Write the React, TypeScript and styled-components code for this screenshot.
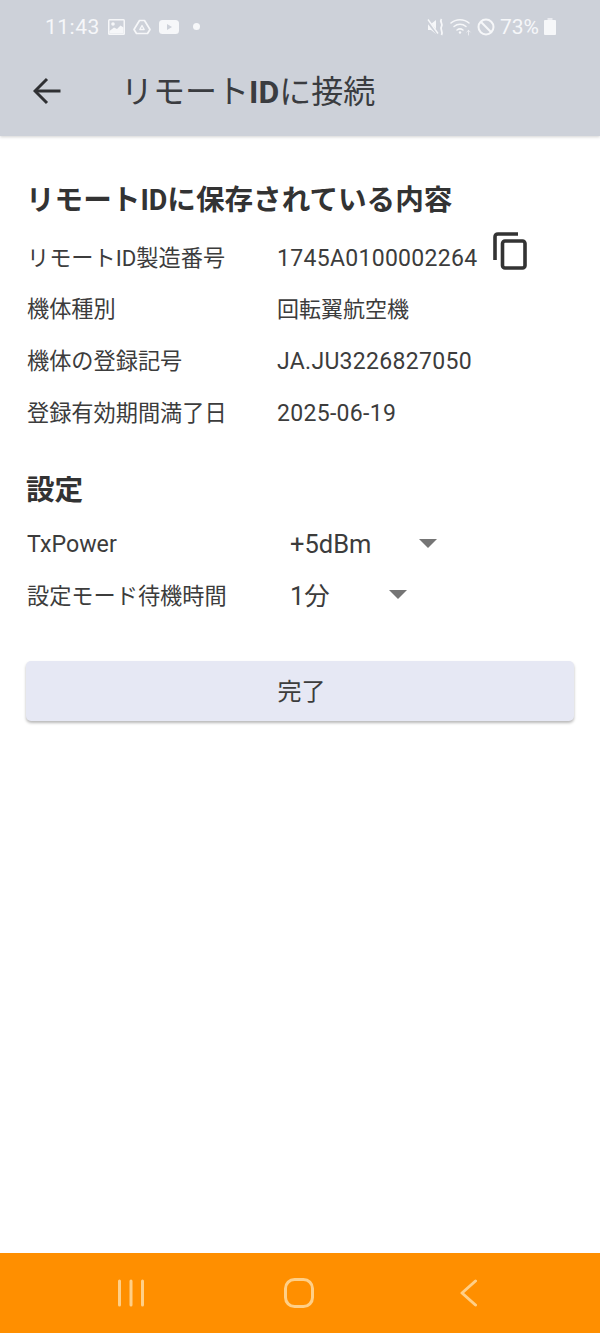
import React from 'react';
import styled, { createGlobalStyle } from 'styled-components';

const FONT = `Roboto, 'Noto Sans CJK JP', sans-serif`;

const GlobalStyle = createGlobalStyle`
    html, body {
        margin: 0;
        padding: 0;
        background: #fff;
    }
`;

const Page = styled.div`
    display: flex;
    flex-direction: column;
    width: 600px;
    height: 1333px;
    overflow: hidden;
    font-family: ${FONT};
    color: #333;
    background: #fff;
`;

const Top = styled.header`
    flex: none;
    height: 136px;
    background: #cdd1d9;
    box-shadow: 0 1px 3px rgba(0, 0, 0, 0.18);
    display: flex;
    flex-direction: column;
`;

const StatusBar = styled.div`
    display: flex;
    align-items: center;
    justify-content: space-between;
    height: 53px;
    padding: 0 44px 0 45px;
    color: #f6f7f9;
    font-size: 21px;
    line-height: 26px;
`;

const StatusGroup = styled.div`
    display: flex;
    align-items: center;
    gap: ${(p: { $gap: number }) => p.$gap}px;
`;

const StatusTime = styled.span`
    letter-spacing: 0.5px;
`;

const AppBar = styled.div`
    display: flex;
    align-items: center;
    height: 75px;
    padding-left: 33px;
`;

const BackButton = styled.div`
    display: flex;
    width: 88px;
`;

const Title = styled.h1`
    margin: 0;
    font-size: 32px;
    line-height: 40px;
    font-weight: 400;
    color: #3a3c40;
    padding-top: 3px;
    b {
        font-weight: 700;
    }
`;

const Main = styled.main`
    flex: 1;
    padding: 45px 26px 0 27px;
`;

const Heading = styled.h2`
    margin: 0 0 ${(p: { $gap: number }) => p.$gap}px -1px;
    height: 38px;
    line-height: 38px;
    font-size: 28.6px;
    font-weight: 700;
    color: #333;
`;

const InfoList = styled.div`
    display: flex;
    flex-direction: column;
    margin-bottom: 32px;
`;

const Row = styled.div`
    display: flex;
    align-items: center;
    height: 51.6px;
    color: #3c3c3c;
`;

const Label = styled.div<{ $latin?: boolean; $raised?: boolean }>`
    flex: none;
    width: 250px;
    margin-top: ${(p) => (p.$raised ? -2 : 0)}px;
    white-space: nowrap;
    line-height: 30px;
    font-size: ${(p) => (p.$latin ? 23.2 : 22.2)}px;
`;

const Value = styled.div<{ $latin?: boolean }>`
    white-space: nowrap;
    line-height: 30px;
    font-size: ${(p) => (p.$latin ? 23 : 22)}px;
    letter-spacing: ${(p) => (p.$latin ? 0.3 : 0)}px;
`;

const CopyButton = styled.div`
    display: flex;
    margin: -16px 0 0 16px;
`;

const SelectValue = styled.div`
    display: flex;
    align-items: center;
    margin-left: 13px;
    width: ${(p: { $width: number }) => p.$width}px;
    justify-content: space-between;
    line-height: 32px;
    font-size: 25.5px;
    color: #3c3c3c;
    white-space: nowrap;
`;

const Caret = styled.span`
    width: 0;
    height: 0;
    border-left: 9.5px solid transparent;
    border-right: 9.5px solid transparent;
    border-top: 9.5px solid #757575;
    margin-top: -2px;
`;

const DoneButton = styled.button`
    display: block;
    width: 548px;
    height: 60px;
    margin: 39px 0 0 -1px;
    padding: 0 0 2px 3px;
    border: 0;
    border-radius: 5px;
    background: #e6e8f4;
    box-shadow: 0 2px 3px rgba(0, 0, 0, 0.28);
    font-family: ${FONT};
    font-size: 24px;
    color: #3c3c3c;
`;

const NavBar = styled.nav`
    flex: none;
    height: 80px;
    background: #ff8f00;
    display: flex;
    align-items: center;
    gap: 139px;
    padding-left: 117px;
    box-sizing: border-box;
`;

const NavBack = styled.span`
    display: flex;
    margin-left: 7px;
`;

const StatusDot = styled.span`
    width: 7px;
    height: 7px;
    margin-left: 6px;
    border-radius: 50%;
    background: #f6f7f9;
`;

function GalleryIcon() {
    return (
        <svg width="17" height="16" viewBox="0 0 17 16">
            <rect width="17" height="16" rx="1.5" fill="#f6f7f9" />
            <rect x="1.5" y="1.5" width="14" height="13" fill="#cdd1d9" />
            <circle cx="5" cy="5" r="1.8" fill="#f6f7f9" />
            <path d="M1.5 12 L6 8.500 L9 10 L12.500 6.500 L15.500 8.500 V14.500 H1.500 Z" fill="#f6f7f9" />
        </svg>
    );
}

function DriveIcon() {
    return (
        <svg width="18" height="16" viewBox="0 0 18 16" fill="none" stroke="#f6f7f9" strokeWidth="1.7" strokeLinejoin="round">
            <path d="M6.500 1.500 H11.500 L17 10.500 L14.500 14.500 H3.500 L1 10.500 Z" />
            <path d="M9 6.500 L11.200 10.500 H6.800 Z" strokeWidth="1.300" />
        </svg>
    );
}

function YoutubeIcon() {
    return (
        <svg width="20" height="14" viewBox="0 0 20 14">
            <rect width="20" height="14" rx="3.500" fill="#f6f7f9" />
            <path d="M8 4 L13 7 L8 10 Z" fill="#cdd1d9" />
        </svg>
    );
}

function MuteIcon() {
    return (
        <svg width="18" height="18" viewBox="0 0 18 18" fill="none">
            <path d="M1 6 H4 L9 2 V16 L4 12 H1 Z" fill="#f6f7f9" />
            <path d="M0 2.500 L10 15" stroke="#cdd1d9" strokeWidth="3" />
            <path d="M1 1.500 L11 15.500" stroke="#f6f7f9" strokeWidth="1.400" />
            <path d="M14.500 1 C12 4 16.500 5.500 14.500 8.500 C12.500 11.500 16.500 13 14.500 17" stroke="#f6f7f9" strokeWidth="1.800" />
        </svg>
    );
}

function WifiIcon() {
    return (
        <svg width="22" height="20" viewBox="0 0 22 20" fill="none" stroke="#f6f7f9" strokeLinecap="round">
            <path d="M1 6 C6 1.500 14 1.500 19 6" strokeWidth="1.500" />
            <path d="M4 9.500 C7.500 6.500 12.500 6.500 16 9.500" strokeWidth="1.500" />
            <path d="M7 13 C9 11.500 11 11.500 13 13" strokeWidth="1.500" />
            <circle cx="10" cy="15.500" r="1.200" fill="#f6f7f9" stroke="none" />
            <path d="M18.500 18 V13.500 M16.800 15 L18.500 13.300 L20.200 15" strokeWidth="1" opacity="0.7" />
        </svg>
    );
}

function BlockIcon() {
    return (
        <svg width="18" height="18" viewBox="0 0 18 18" fill="none" stroke="#f6f7f9" strokeWidth="2">
            <circle cx="9" cy="9" r="7.500" />
            <path d="M3.800 3.800 L14.200 14.200" />
        </svg>
    );
}

function BatteryIcon() {
    return (
        <svg width="12" height="17" viewBox="0 0 12 17">
            <rect x="3.500" width="5" height="2" fill="#f6f7f9" opacity="0.7" />
            <rect y="2" width="12" height="15" rx="1" fill="#f6f7f9" />
        </svg>
    );
}

function BackArrow() {
    return (
        <svg width="28" height="28" viewBox="0 0 28 28" fill="none" stroke="#2f3033" strokeWidth="3">
            <path d="M27.500 14 H3" />
            <path d="M14 2 L2 14 L14 26" />
        </svg>
    );
}

function CopyIcon() {
    return (
        <svg width="34" height="38" viewBox="0 0 34 38" fill="none" stroke="#333" strokeWidth="3.600">
            <path d="M25 2 H5 Q2 2 2 5 V28" />
            <rect x="9.500" y="9" width="22.500" height="27" rx="2.500" />
        </svg>
    );
}

function RecentsIcon() {
    return (
        <svg width="28" height="28" viewBox="0 0 28 28" stroke="#ffcf87" strokeWidth="3" strokeLinecap="round">
            <path d="M2.500 2 V26 M14 2 V26 M25.500 2 V26" />
        </svg>
    );
}

function HomeIcon() {
    return (
        <svg width="30" height="30" viewBox="0 0 30 30" fill="none" stroke="#ffcf87" strokeWidth="3">
            <rect x="1.500" y="1.500" width="27" height="27" rx="9" />
        </svg>
    );
}

function BackNavIcon() {
    return (
        <svg width="17" height="28" viewBox="0 0 17 28" fill="none" stroke="#ffcf87" strokeWidth="3" strokeLinecap="round" strokeLinejoin="round">
            <path d="M15.500 2 L2 14 L15.500 26" />
        </svg>
    );
}

const INFO = [
    { label: 'リモートID製造番号', value: '1745A0100002264', latin: true, copy: true },
    { label: '機体種別', value: '回転翼航空機' },
    { label: '機体の登録記号', value: 'JA.JU3226827050', latin: true },
    { label: '登録有効期間満了日', value: '2025-06-19', latin: true },
];

export default function App() {
    return (
        <Page>
            <GlobalStyle />
            <Top>
                <StatusBar>
                    <StatusGroup $gap={8}>
                        <StatusTime>11:43</StatusTime>
                        <GalleryIcon />
                        <DriveIcon />
                        <YoutubeIcon />
                        <StatusDot />
                    </StatusGroup>
                    <StatusGroup $gap={5}>
                        <MuteIcon />
                        <WifiIcon />
                        <BlockIcon />
                        <span>73%</span>
                        <BatteryIcon />
                    </StatusGroup>
                </StatusBar>
                <AppBar>
                    <BackButton>
                        <BackArrow />
                    </BackButton>
                    <Title>
                        リモート<b>ID</b>に接続
                    </Title>
                </AppBar>
            </Top>
            <Main>
                <Heading $gap={14}>リモートIDに保存されている内容</Heading>
                <InfoList>
                    {INFO.map((row) => (
                        <Row key={row.label}>
                            <Label $raised>{row.label}</Label>
                            <Value $latin={row.latin}>{row.value}</Value>
                            {row.copy && (
                                <CopyButton>
                                    <CopyIcon />
                                </CopyButton>
                            )}
                        </Row>
                    ))}
                </InfoList>
                <Heading $gap={9}>設定</Heading>
                <Row>
                    <Label $latin>TxPower</Label>
                    <SelectValue $width={147}>
                        +5dBm
                        <Caret />
                    </SelectValue>
                </Row>
                <Row>
                    <Label>設定モード待機時間</Label>
                    <SelectValue $width={117}>
                        1分
                        <Caret />
                    </SelectValue>
                </Row>
                <DoneButton>完了</DoneButton>
            </Main>
            <NavBar>
                <RecentsIcon />
                <HomeIcon />
                <NavBack>
                    <BackNavIcon />
                </NavBack>
            </NavBar>
        </Page>
    );
}
